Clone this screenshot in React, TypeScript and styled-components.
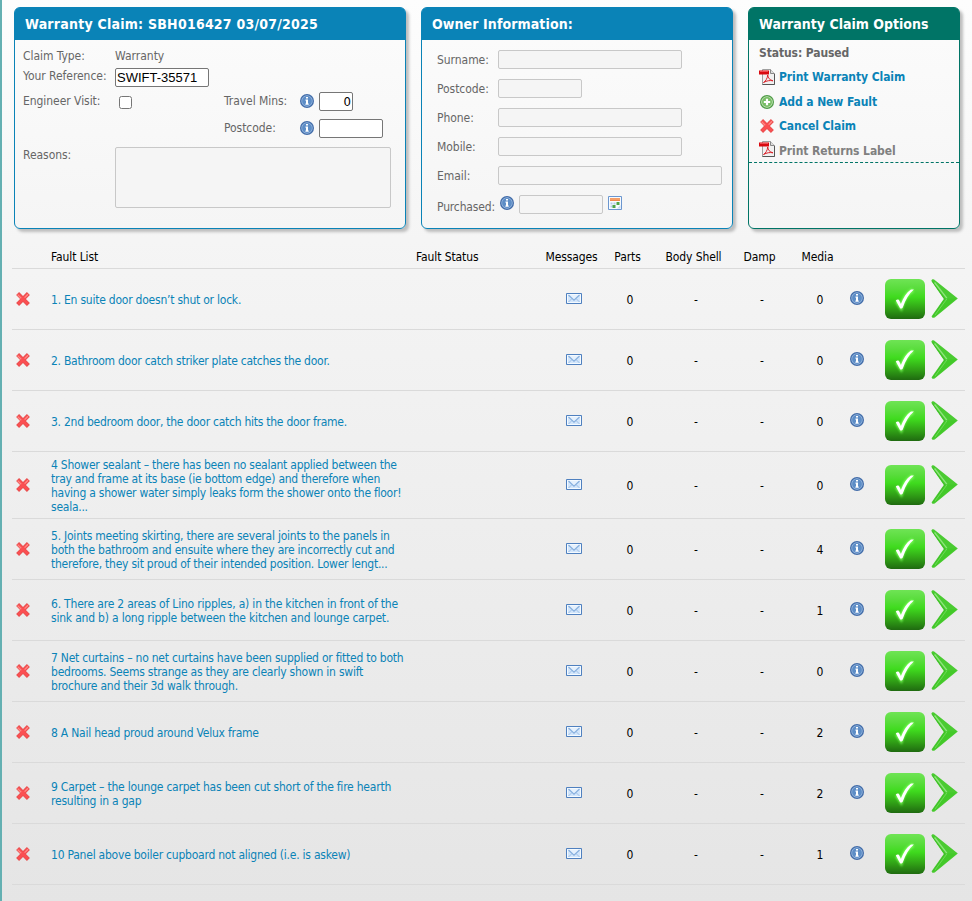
import React from "react";
import styled, { createGlobalStyle } from "styled-components";

const BLUE = "#0a83b7";
const GREEN = "#007466";

const Global = createGlobalStyle`
  html, body { margin: 0; padding: 0; }
  body { font-family: "DejaVu Sans Condensed", "DejaVu Sans", sans-serif; font-size: 12px; color: #000; }
  *, *::before, *::after { box-sizing: border-box; }
  svg { display: block; flex: none; }
`;

const Page = styled.div`
  width: 972px;
  height: 901px;
  overflow: hidden;
  border-left: 2px solid #64b0b2;
  background: linear-gradient(#fdfdfd, #f4f4f4 30%, #e5e5e5);
`;

const Cards = styled.div`
  display: flex;
  gap: 15px;
  padding: 7px 12px 0;
`;

const Card = styled.section<{ $w: number; $tone: string }>`
  width: ${(p) => p.$w}px;
  height: 222px;
  border: 1px solid ${(p) => p.$tone};
  border-radius: 6px;
  box-shadow: 3px 3px 3px #bdbdbd;
  background: linear-gradient(#fcfcfc, #f5f5f5);
`;

const CardTitle = styled.h2<{ $tone: string; $track: number }>`
  height: 32px;
  margin: 0;
  padding: 0 10px;
  border-radius: 4px 4px 0 0;
  background: ${(p) => p.$tone};
  color: #fff;
  font-size: 14px;
  line-height: 33px;
  letter-spacing: ${(p) => p.$track}px;
  white-space: nowrap;
`;

const ClaimForm = styled.div`
  display: grid;
  grid-template-columns: 92px 109px 76px 19px 1fr;
  grid-template-rows: 20px 24px 27px 28px 61px;
  padding: 8px 0 0 8px;
`;

const Label = styled.label<{ $top?: number }>`
  padding-top: ${(p) => p.$top ?? 0}px;
  line-height: 16px;
  letter-spacing: -0.05px;
  color: #666;
  white-space: nowrap;
`;

const Field = styled.input<{ $w: number; $arial?: boolean; $right?: boolean }>`
  width: ${(p) => p.$w}px;
  height: 19px;
  margin: 0;
  padding: 0 1px;
  border: 1px solid #767676;
  border-radius: 2px;
  background: #fff;
  color: #000;
  font-family: ${(p) => (p.$arial ? '"Liberation Sans", Arial, sans-serif' : "inherit")};
  font-size: 13px;
  text-align: ${(p) => (p.$right ? "right" : "left")};
  outline: none;
  &:disabled { border-color: #c8c8c8; background: #f5f5f5; }
`;

const WideCell = styled.div`
  grid-column: 2 / -1;
  line-height: 16px;
  color: #666;
`;

const Check = styled.input`
  width: 13px;
  height: 13px;
  margin: 4px 0 0 4px;
`;

const Reasons = styled.textarea`
  grid-column: 2 / -1;
  width: 276px;
  height: 61px;
  margin: 0;
  border: 1px solid #c8c8c8;
  border-radius: 2px;
  background: #f5f5f5;
  resize: none;
`;

const IconCell = styled.span<{ $top?: number }>`
  padding-top: ${(p) => p.$top ?? 0}px;
`;

const OwnerForm = styled.div`
  display: flex;
  flex-direction: column;
  gap: 10px;
  padding: 10px 0 0 15px;
`;

const OwnerRow = styled.div`
  display: flex;
  height: 19px;
`;

const OwnerLabel = styled(Label)`
  width: 61px;
  padding-top: 2px;
`;

const PurchasedLabel = styled(OwnerLabel)`
  padding-top: 4px;
  letter-spacing: -0.15px;
`;

const PurchasedIcons = styled.div`
  display: flex;
  align-items: flex-start;
  gap: 5px;
  padding-left: 2px;
`;

const Status = styled.p`
  margin: 0;
  padding: 5px 10px 0;
  line-height: 16px;
  font-weight: bold;
  letter-spacing: -0.1px;
  color: #666;
`;

const Options = styled.ul`
  display: grid;
  grid-template-rows: 25px 24px 25px 26px;
  margin: 0;
  padding: 4px 10px 0;
  height: 102px;
  border-bottom: 1px dashed ${GREEN};
  list-style: none;
`;

const Option = styled.li<{ $off?: boolean }>`
  display: grid;
  grid-template-columns: 20px 1fr;
  height: 24px;
  align-items: center;
  font-weight: bold;
  letter-spacing: -0.08px;
  color: ${(p) => (p.$off ? "#808080" : BLUE)};
`;

const OptionIcon = styled.span<{ $lift?: number; $inset?: number }>`
  padding-left: ${(p) => p.$inset ?? 0}px;
  padding-bottom: ${(p) => p.$lift ?? 0}px;
`;

const Table = styled.div`
  width: 953px;
  margin: 17px 0 0 10px;
`;

const Line = styled.div`
  display: grid;
  grid-template-columns: 39px 365px 130px 56px 56px 76px 56px 60px 35px 46px 34px;
  align-items: center;
  border-bottom: 1px solid #dadada;
`;

const HeadLine = styled(Line)`
  height: 23px;
  padding-bottom: 1px;
  letter-spacing: -0.1px;
`;

const FaultLine = styled(Line)<{ $tall?: boolean }>`
  height: ${(p) => (p.$tall ? 67 : 61)}px;
`;

const Head = styled.span<{ $left?: boolean }>`
  display: flex;
  justify-content: ${(p) => (p.$left ? "flex-start" : "center")};
  padding-right: 5px;
  white-space: nowrap;
`;

const Value = styled.span`
  padding-top: 1px;
  text-align: center;
`;

const MailCell = styled.span`
  display: flex;
  justify-content: center;
  padding-bottom: 2px;
`;

const InfoCell = styled.span`
  padding-bottom: 2px;
`;

const DeleteCell = styled.span`
  padding-left: 4px;
`;

const FaultText = styled.a<{ $track: number }>`
  padding-top: 1px;
  color: ${BLUE};
  line-height: 14px;
  letter-spacing: ${(p) => p.$track}px;
  white-space: pre;
`;

const InfoIcon = () => (
  <svg width="14" height="14" viewBox="0 0 14 14">
    <circle cx="7" cy="7" r="7" fill="#416ca9" />
    <circle cx="7" cy="7" r="5.7" fill="#9dbbe0" />
    <circle cx="7" cy="7" r="4.900" fill="#5d8dc6" />
    <path d="M6 3h2v1.600H6zM5.500 5.600H8v4h.7v1.100H5.400V9.600H6V6.700h-.5z" fill="#fff" />
  </svg>
);

const CrossIcon = () => (
  <svg width="14" height="14" viewBox="0 0 14 14">
    <path d="M1.600 1.600l10.800 10.800M12.400 1.600L1.600 12.400" stroke="#e85050" strokeWidth="4.200" />
    <path d="M2.200 2.200l9.600 9.600M11.800 2.200l-9.600 9.600" stroke="#fb4f52" strokeWidth="2.600" />
    <path d="M1.600 2.600l3.600 3.600M12 2.200L8.600 5.600" stroke="#ff8a86" strokeWidth="1.300" />
  </svg>
);

const PdfIcon = () => (
  <svg width="16" height="16" viewBox="0 0 16 16">
    <path d="M3.500 .5h8l4 4v11h-12z" fill="#f1f1f1" stroke="#a0a0a0" />
    <path d="M3.500 15.500h12V5" fill="none" stroke="#555" />
    <path d="M11.500 .5v4h4" fill="#ddd" stroke="#888" />
    <path d="M0 1.500h10v4H0z" fill="#d9090f" />
    <path d="M1 2.400h8" stroke="#f2555a" />
    <path d="M4.500 13.500c2-1.200 4-4 4.200-7.500.2 3 2 5 5.300 5.800-3.200-.6-6-.2-9.500 1.700z" fill="none" stroke="#d9222a" />
  </svg>
);

const PlusIcon = () => (
  <svg width="14" height="14" viewBox="0 0 14 14">
    <circle cx="7" cy="7" r="7" fill="#4d9a45" />
    <circle cx="7" cy="7" r="5.800" fill="#cbe8c0" />
    <circle cx="7" cy="7" r="5" fill="#77bd65" />
    <path d="M7 3.800v6.400M3.800 7h6.400" stroke="#fff" strokeWidth="2.200" />
  </svg>
);

const CalendarIcon = () => (
  <svg width="14" height="14" viewBox="0 0 14 14">
    <path d="M.5 .5h13v13H.5z" fill="#f7fbff" stroke="#6b96cf" />
    <path d="M2 2h10v3H2z" fill="#f28a4c" />
    <path d="M2 3h10" stroke="#f9b384" />
    <path d="M2.500 6.500h2v2h-2zM2.500 9.500h2v2h-2zM5.500 6.500h2v2h-2z" fill="#b5cbe6" />
    <path d="M8.500 6h3v3h-3zM4.500 9h3v3h-3z" fill="#4fa54a" />
    <path d="M9 12.500l3.500-3.500v3.500z" fill="#c5d9f0" />
  </svg>
);

const MailIcon = () => (
  <svg width="16" height="11" viewBox="0 0 16 11">
    <path d="M.5 .5h15v10H.5z" fill="#d3e6fb" stroke="#4f80bf" />
    <path d="M1.500 1.500h13v8h-13z" fill="none" stroke="#f4faff" />
    <path d="M2.500 9l3.600-3.600M13.500 9L9.900 5.400" stroke="#9dbfe6" />
    <path d="M2.500 2L8 7.200 13.500 2" fill="#e6f1fd" stroke="#86afde" strokeWidth="1.200" />
  </svg>
);

const AcceptIcon = () => (
  <svg width="40" height="40" viewBox="0 0 40 40">
    <defs>
      <linearGradient id="accept" x1="0" y1="0" x2="0" y2="1">
        <stop offset="0" stopColor="#6fe455" />
        <stop offset=".25" stopColor="#58dc3b" />
        <stop offset=".45" stopColor="#3fdb1e" />
        <stop offset=".75" stopColor="#309f16" />
        <stop offset="1" stopColor="#1f6a10" />
      </linearGradient>
      <filter id="glow" x="-40%" y="-40%" width="180%" height="180%">
        <feGaussianBlur stdDeviation="1.300" />
      </filter>
    </defs>
    <rect width="40" height="40" rx="6" fill="url(#accept)" />
    <path d="M12 22l4 6C18 21 22 14 28 11" fill="none" stroke="#7dff5c" strokeWidth="4" filter="url(#glow)" />
    <path d="M10.800 21.500c1.500-1.600 3-1.200 3.600.3l1.500 3.200c2.500-6.500 5.600-11.400 9.700-14.200 1-.5 2.300-.5 3.300-.2C23.800 15 20.500 21 17.800 28.500c-.7 1.400-2.300 1.500-3 .2z" fill="#fff" />
  </svg>
);

const ArrowIcon = () => (
  <svg width="27" height="40" viewBox="0 0 27 40">
    <path d="M.4 2C.4.2 2.600-.2 4 1.200L26.800 19.500 4 38.300c-1.600 1.200-3.800.4-3.200-1.400L12.800 20z" fill="#4acb31" />
    <path d="M1.500 2.500L13.800 20 2 37.500" fill="none" stroke="#3fbf27" strokeWidth="1" />
    <path d="M3.600 3.500L15.800 19.200" stroke="#8fe47d" strokeWidth="1.300" />
    <path d="M15.800 19.600H25.500L3.800 37.500z" fill="#43c929" />
    <path d="M16 19.800L4 36" stroke="#6bdb55" strokeWidth="1" />
  </svg>
);

type Fault = { text: string; media: number; track?: number; tall?: boolean };

const faults: Fault[] = [
  { text: "1. En suite door doesn’t shut or lock.", media: 0, track: -0.23 },
  { text: "2. Bathroom door catch striker plate catches the door.", media: 0, track: -0.26 },
  { text: "3. 2nd bedroom door, the door catch hits the door frame.", media: 0, track: -0.26 },
  {
    text: "4 Shower sealant – there has been no sealant applied between the\ntray and frame at its base (ie bottom edge) and therefore when\nhaving a shower water simply leaks form the shower onto the floor!\nseala...",
    media: 0,
    tall: true,
  },
  {
    text: "5. Joints meeting skirting, there are several joints to the panels in\nboth the bathroom and ensuite where they are incorrectly cut and\ntherefore, they sit proud of their intended position. Lower lengt...",
    media: 4,
    track: -0.23,
  },
  {
    text: "6. There are 2 areas of Lino ripples, a) in the kitchen in front of the\nsink and b) a long ripple between the kitchen and lounge carpet.",
    media: 1,
    track: -0.2,
  },
  {
    text: "7 Net curtains – no net curtains have been supplied or fitted to both\nbedrooms. Seems strange as they are clearly shown in swift\nbrochure and their 3d walk through.",
    media: 0,
    track: -0.23,
  },
  { text: "8 A Nail head proud around Velux frame", media: 2, track: -0.23 },
  {
    text: "9 Carpet – the lounge carpet has been cut short of the fire hearth\nresulting in a gap",
    media: 2,
    track: -0.22,
  },
  { text: "10 Panel above boiler cupboard not aligned (i.e. is askew)", media: 1, track: -0.23 },
];

const ownerFields = [
  { label: "Surname:", w: 184 },
  { label: "Postcode:", w: 84 },
  { label: "Phone:", w: 184 },
  { label: "Mobile:", w: 184 },
  { label: "Email:", w: 224 },
];

export default function App() {
  return (
    <Page>
      <Global />
      <Cards>
        <Card $w={392} $tone={BLUE}>
          <CardTitle $tone={BLUE} $track={0.23}>Warranty Claim: SBH016427 03/07/2025</CardTitle>
          <ClaimForm>
            <Label>Claim Type:</Label>
            <WideCell>Warranty</WideCell>
            <Label>Your Reference:</Label>
            <WideCell>
              <Field $w={94} $arial defaultValue="SWIFT-35571" />
            </WideCell>
            <Label $top={1}>Engineer Visit:</Label>
            <Check type="checkbox" />
            <Label $top={1}>Travel Mins:</Label>
            <IconCell $top={2}><InfoIcon /></IconCell>
            <Field $w={34} $right defaultValue="0" />
            <span />
            <span />
            <Label $top={1}>Postcode:</Label>
            <IconCell $top={2}><InfoIcon /></IconCell>
            <Field $w={64} />
            <Label>Reasons:</Label>
            <Reasons disabled />
          </ClaimForm>
        </Card>
        <Card $w={312} $tone={BLUE}>
          <CardTitle $tone={BLUE} $track={0.1}>Owner Information:</CardTitle>
          <OwnerForm>
            {ownerFields.map((f) => (
              <OwnerRow key={f.label}>
                <OwnerLabel>{f.label}</OwnerLabel>
                <Field $w={f.w} disabled />
              </OwnerRow>
            ))}
            <OwnerRow>
              <PurchasedLabel>Purchased:</PurchasedLabel>
              <PurchasedIcons>
                <IconCell $top={1}><InfoIcon /></IconCell>
                <Field $w={84} disabled />
                <IconCell $top={1}><CalendarIcon /></IconCell>
              </PurchasedIcons>
            </OwnerRow>
          </OwnerForm>
        </Card>
        <Card $w={212} $tone={GREEN}>
          <CardTitle $tone={GREEN} $track={0}>Warranty Claim Options</CardTitle>
          <Status>Status: Paused</Status>
          <Options>
            <Option><OptionIcon><PdfIcon /></OptionIcon>Print Warranty Claim</Option>
            <Option><OptionIcon $inset={1}><PlusIcon /></OptionIcon>Add a New Fault</Option>
            <Option><OptionIcon $inset={1}><CrossIcon /></OptionIcon>Cancel Claim</Option>
            <Option $off><OptionIcon $lift={5}><PdfIcon /></OptionIcon>Print Returns Label</Option>
          </Options>
        </Card>
      </Cards>
      <Table>
        <HeadLine>
          <span />
          <Head $left>Fault List</Head>
          <Head $left>Fault Status</Head>
          <Head>Messages</Head>
          <Head>Parts</Head>
          <Head>Body Shell</Head>
          <Head>Damp</Head>
          <Head>Media</Head>
        </HeadLine>
        {faults.map((f) => (
          <FaultLine key={f.text} $tall={f.tall}>
            <DeleteCell><CrossIcon /></DeleteCell>
            <FaultText $track={f.track ?? -0.25}>{f.text}</FaultText>
            <span />
            <MailCell><MailIcon /></MailCell>
            <Value>0</Value>
            <Value>-</Value>
            <Value>-</Value>
            <Value>{f.media}</Value>
            <InfoCell><InfoIcon /></InfoCell>
            <AcceptIcon />
            <ArrowIcon />
          </FaultLine>
        ))}
      </Table>
    </Page>
  );
}
